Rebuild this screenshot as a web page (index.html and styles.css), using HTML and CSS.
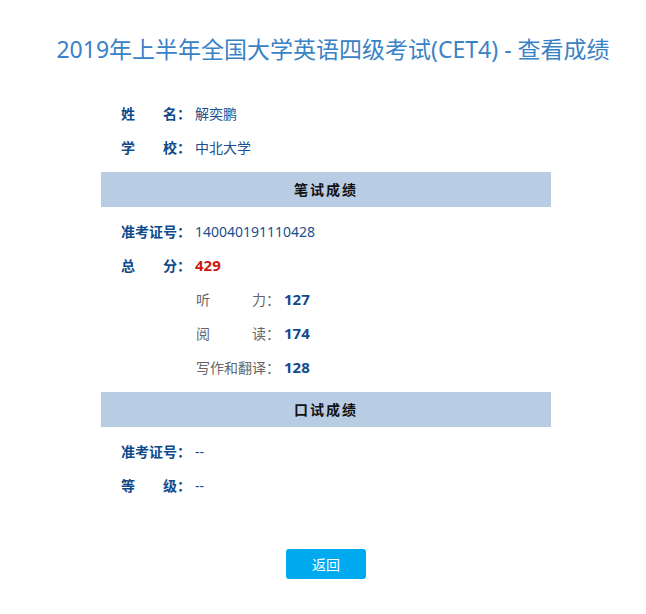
FILE: index.html
```html
<!DOCTYPE html>
<html lang="zh-CN">
<head>
<meta charset="utf-8">
<title>2019年上半年全国大学英语四级考试(CET4) - 查看成绩</title>
<link rel="stylesheet" href="styles.css">
</head>
<body>
<div class="page">
  <h1 class="title">2019年上半年全国大学英语四级考试(CET4) - 查看成绩</h1>
  <div class="card">
    <div class="row"><span class="lbl">姓名</span><span class="colon">：</span><span class="val">解奕鹏</span></div>
    <div class="row"><span class="lbl">学校</span><span class="colon">：</span><span class="val">中北大学</span></div>
    <div class="bar">笔试成绩</div>
    <div class="row"><span class="lbl">准考证号</span><span class="colon">：</span><span class="val">140040191110428</span></div>
    <div class="row"><span class="lbl">总分</span><span class="colon">：</span><span class="val total">429</span></div>
    <div class="row sub"><span class="lbl wide">听力</span><span class="colon">：</span><span class="val score">127</span></div>
    <div class="row sub"><span class="lbl wide">阅读</span><span class="colon">：</span><span class="val score">174</span></div>
    <div class="row sub"><span class="lbl wide">写作和翻译</span><span class="colon">：</span><span class="val score">128</span></div>
    <div class="bar">口试成绩</div>
    <div class="row"><span class="lbl">准考证号</span><span class="colon">：</span><span class="val">--</span></div>
    <div class="row"><span class="lbl">等级</span><span class="colon">：</span><span class="val">--</span></div>
    <div class="actions"><button class="btn" type="button">返回</button></div>
  </div>
</div>
</body>
</html>
```
FILE: styles.css
```css
html, body {
  margin: 0;
  padding: 0;
  background: #fff;
}
body {
  font-family: "Noto Sans", "Noto Sans CJK SC", sans-serif;
  font-size: 14px;
}
.page {
  padding: 0 0 0 6px;
}
.title {
  margin: 33px 0 0;
  padding-left: 14px;
  font-size: 23px;
  line-height: 32px;
  font-weight: normal;
  color: #3a82c6;
  text-align: center;
}
.card {
  width: 450px;
  margin: 31px auto 0;
}
.row {
  display: flex;
  align-items: center;
  height: 34px;
  padding-left: 20px;
  color: #0f4a8a;
}
.lbl {
  display: inline-block;
  width: 56px;
  font-weight: bold;
  text-align: justify;
  text-align-last: justify;
}
.colon {
  font-weight: bold;
  width: 14px;
}
.val {
  margin-left: 4px;
  color: #1c4f8d;
}
.total {
  color: #cc1a12;
  font-weight: bold;
  font-size: 15px;
}
.sub {
  padding-left: 95px;
}
.sub .lbl, .sub .colon {
  font-weight: normal;
  color: #666;
}
.lbl.wide {
  width: 70px;
}
.score {
  font-weight: bold;
  font-size: 15px;
  color: #134a8a;
}
.bar {
  height: 35px;
  line-height: 35px;
  margin: 8px 0 7px;
  background: #b8cce4;
  color: #111;
  font-weight: bold;
  text-align: center;
  letter-spacing: 2px;
}
.actions {
  display: flex;
  justify-content: center;
  margin-top: 47px;
}
.btn {
  width: 80px;
  height: 30px;
  border: 0;
  border-radius: 3px;
  background: #00aaef;
  color: #fff;
  font-family: inherit;
  font-size: 14px;
  padding: 0;
}
```
